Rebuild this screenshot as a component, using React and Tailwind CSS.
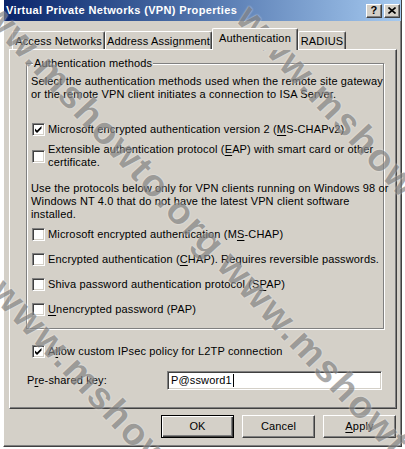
import React from 'react';

const font = { fontFamily: '"Liberation Sans", Arial, sans-serif' };

const Check = ({ checked }) => (
  <span className="relative shrink-0 w-[13px] h-[13px] bg-white border border-t-[#808080] border-l-[#808080] border-r-white border-b-white shadow-[inset_1px_1px_0_#404040,inset_-1px_-1px_0_#d4d0c8]">
    {checked && (
      <svg className="absolute left-0 top-0" width="11" height="11" viewBox="0 0 11 11">
        <path d="M2 4.5 L4 6.5 L8.5 2 L8.5 4.5 L4 9 L2 7 Z" fill="#000" />
      </svg>
    )}
  </span>
);

const Option = ({ checked, children, className = '' }) => (
  <div className={`flex items-center gap-[3px] ${className}`}>
    <Check checked={checked} />
    <div className="leading-[13px] whitespace-nowrap">{children}</div>
  </div>
);

const U = ({ children }) => <span className="underline underline-offset-[2px]">{children}</span>;

const Tab = ({ label, width, selected }) =>
  selected ? (
    <div
      className={`relative z-10 -mx-[2px] -mb-px h-[22px] ${width} bg-[#d4d0c8] border-t border-l border-t-white border-l-white border-r border-r-[#404040] rounded-t-[2px] shadow-[inset_-1px_0_0_#808080] flex justify-center pt-[3px] leading-[13px] whitespace-nowrap`}
    >
      {label}
    </div>
  ) : (
    <div
      className={`h-[18px] ${width} bg-[#d4d0c8] border-t border-l border-t-white border-l-white border-r border-r-[#404040] rounded-t-[2px] shadow-[inset_-1px_0_0_#808080] flex justify-center pt-[3px] leading-[13px] whitespace-nowrap`}
    >
      {label}
    </div>
  );

const Button = ({ children, isDefault }) => (
  <div
    className={`w-[73px] h-[23px] flex items-center justify-center ${
      isDefault
        ? 'border border-black shadow-[inset_1px_1px_0_#fff,inset_-1px_-1px_0_#404040,inset_-2px_-2px_0_#808080]'
        : 'border border-t-white border-l-white border-r-[#404040] border-b-[#404040] shadow-[inset_-1px_-1px_0_#808080]'
    }`}
  >
    {children}
  </div>
);

// diagonal site watermark laid over the screenshot
const Watermark = ({ className }) => (
  <span
    className={`absolute pointer-events-none whitespace-nowrap origin-left rotate-[47deg] text-[38px] font-bold leading-[38px] tracking-[2px] text-[#858585] opacity-70 [text-shadow:0_0_2px_#fff] ${className}`}
  >
    www.mshowto.org
  </span>
);

export default function App() {
  return (
    <div className="relative w-[405px] h-[449px] bg-white overflow-hidden text-[11px] tracking-[0.15px] text-black" style={font}>
      <div className="ml-[3px] w-[399px] h-[447px] bg-[#d4d0c8] border-l border-r border-b border-l-white border-r-[#404040] border-b-[#404040] shadow-[inset_-1px_-1px_0_#808080]">
        {/* title bar */}
        <div className="h-[21px] bg-gradient-to-r from-[#0a246a] to-[#a6caf0] flex items-center justify-between pl-[2px] pr-[1px]">
          <span className="text-white font-bold text-[11px] tracking-[0.35px] whitespace-nowrap">Virtual Private Networks (VPN) Properties</span>
          <div className="flex gap-[2px]">
            <div className="w-[16px] h-[14px] bg-[#d4d0c8] border border-t-white border-l-white border-r-[#404040] border-b-[#404040] shadow-[inset_-1px_-1px_0_#808080] flex items-center justify-center font-bold text-[11px] leading-none">
              ?
            </div>
            <div className="w-[16px] h-[14px] bg-[#d4d0c8] border border-t-white border-l-white border-r-[#404040] border-b-[#404040] shadow-[inset_-1px_-1px_0_#808080] flex items-center justify-center">
              <svg width="8" height="7" viewBox="0 0 8 7">
                <path d="M0.5 0.5 L7.5 6.5 M7.5 0.5 L0.5 6.5" stroke="#000" strokeWidth="1.6" />
              </svg>
            </div>
          </div>
        </div>

        <div className="pl-[5px]">
          {/* tabs */}
          <div className="mt-[7px] h-[21px] flex items-end pl-[3px]">
            <Tab label="Access Networks" width="w-[93px]" />
            <Tab label="Address Assignment" width="w-[107px]" />
            <div className="w-[2px]" />
            <Tab label="Authentication" width="w-[86px]" selected />
            <div className="w-[2px]" />
            <Tab label="RADIUS" width="w-[48px]" />
          </div>

          {/* tab panel */}
          <div className="w-[388px] h-[360px] border border-t-white border-l-white border-r-[#404040] border-b-[#404040] shadow-[inset_-1px_-1px_0_#808080] pt-[13px] pl-[16px]">
            <div className="relative w-[358px] border border-[#808080] shadow-[inset_1px_1px_0_#fff,1px_1px_0_#fff] pt-[11px] pb-[12px] pl-[4px]">
              <span className="absolute -top-[7px] left-[6px] bg-[#d4d0c8] px-px leading-[13px] whitespace-nowrap">Authentication methods</span>
              <p className="leading-[13px] whitespace-nowrap">
                Select the authentication methods used when the remote site gateway
                <br />
                or the remote VPN client initiates a connection to ISA Server.
              </p>
              <Option checked className="mt-[22px] ml-px">
                Microsoft encrypted authentication version 2 (<U>M</U>S-CHAPv2)
              </Option>
              <Option className="mt-[7px] ml-px">
                Extensible authentication protocol (<U>E</U>AP) with smart card or other
                <br />
                certificate.
              </Option>
              <p className="mt-[13px] leading-[13px] whitespace-nowrap">
                Use the protocols below only for VPN clients running on Windows 98 or
                <br />
                Windows NT 4.0 that do not have the latest VPN client software
                <br />
                installed.
              </p>
              <Option className="mt-[7px] ml-px">
                Microsoft encrypted authentication (M<U>S</U>-CHAP)
              </Option>
              <Option className="mt-[12px] ml-px">
                Encrypted authentication (<U>C</U>HAP). Requires reversible passwords.
              </Option>
              <Option className="mt-[12px] ml-px">
                Shiva password authentication protocol (S<U>P</U>AP)
              </Option>
              <Option className="mt-[12px] ml-px">
                <U>U</U>nencrypted password (PAP)
              </Option>
            </div>

            <Option checked className="mt-[16px] ml-[6px]">
              A<U>l</U>low custom IPsec policy for L2TP connection
            </Option>

            <div className="mt-[13px] flex items-center">
              <span className="w-[141px] pl-px leading-[13px] whitespace-nowrap">
                P<U>r</U>e-shared key:
              </span>
              <div className="w-[215px] h-[19px] bg-white border border-t-[#808080] border-l-[#808080] border-r-white border-b-white shadow-[inset_1px_1px_0_#404040,inset_-1px_-1px_0_#d4d0c8] flex items-center pl-[3px]">
                P@ssword1
                <span className="ml-px w-px h-[13px] bg-black" />
              </div>
            </div>
          </div>

          {/* buttons */}
          <div className="mt-[6px] flex justify-end gap-[8px] w-[387px]">
            <Button isDefault>OK</Button>
            <Button>Cancel</Button>
            <Button>
              <span>
                <U>A</U>pply
              </span>
            </Button>
          </div>
        </div>
      </div>

      <Watermark className="left-[244px] top-[-8px]" />
      <Watermark className="left-[-31px] top-[-35px]" />
      <Watermark className="left-[-2px] top-[266px]" />
      <Watermark className="left-[225px] top-[239px]" />
    </div>
  );
}
